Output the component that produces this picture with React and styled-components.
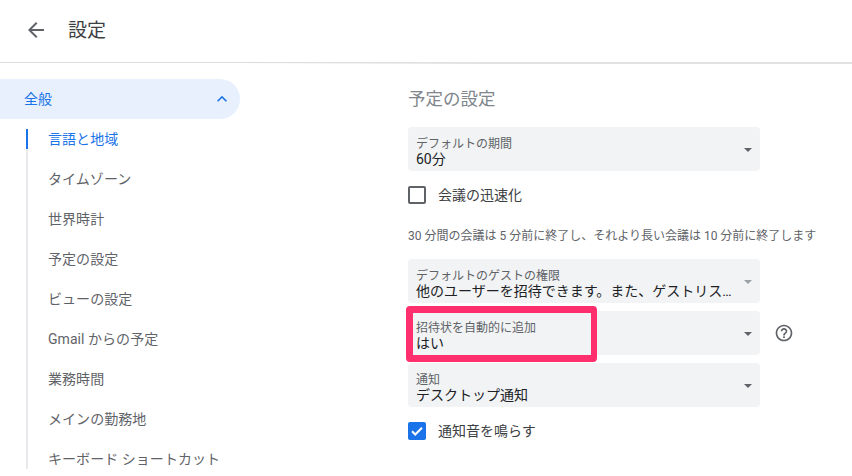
import React from "react";
import styled, { createGlobalStyle } from "styled-components";

const Global = createGlobalStyle`
  html, body {
    margin: 0;
    padding: 0;
    height: 476px;
    overflow: hidden;
    background: #fff;
  }
  body {
    font-family: Roboto, "Noto Sans CJK JP", sans-serif;
  }
`;

const Page = styled.div`
  width: 852px;
  height: 469px;
  overflow: hidden;
  display: flex;
  flex-direction: column;
`;

const Header = styled.header`
  position: relative;
  flex: none;
  display: flex;
  align-items: center;
  padding: 0 0 2px 24px;
  gap: 21px;
  border-bottom: 1px solid #dadce0;
  height: 60px;
  &::after {
    content: "";
    position: absolute;
    left: 240px;
    right: 0;
    top: 100%;
    height: 2px;
    background: linear-gradient(to right, transparent, #e2e2e2 40%, #e2e2e2);
  }
`;

const BackIcon = styled.svg`
  width: 24px;
  height: 24px;
  fill: #5f6368;
`;

const HeaderTitle = styled.div`
  font-size: 19px;
  color: #3c4043;
  margin-left: -1px;
  padding-bottom: 3px;
`;

const Body = styled.div`
  flex: 1;
  display: flex;
  min-height: 0;
`;

const Sidebar = styled.nav`
  width: 240px;
  flex: none;
  padding-top: 16px;
`;

const GroupRow = styled.div`
  height: 40px;
  box-sizing: border-box;
  border-radius: 0 20px 20px 0;
  background: #e8f0fe;
  color: #1a73e8;
  font-size: 14px;
  display: flex;
  align-items: center;
  justify-content: space-between;
  padding: 0 8px 2px 24px;
`;

const Chevron = styled.svg`
  width: 20px;
  height: 20px;
  fill: #1a73e8;
  margin-bottom: -2px;
`;

const SubList = styled.div`
  margin: 10px 0 0 26px;
  border-left: 2px solid #e8eaed;
  display: flex;
  flex-direction: column;
`;

const SubItem = styled.div`
  height: 40px;
  box-sizing: border-box;
  display: flex;
  align-items: center;
  padding: 0 0 2px 22px;
  margin-left: -2px;
  font-size: 14px;
  letter-spacing: 0.05px;
  white-space: nowrap;
  color: ${({ $active }) => ($active ? "#1a73e8" : "#5f6368")};
  position: relative;
  &:first-child {
    margin-top: -10px;
  }
  &::before {
    content: "";
    display: ${({ $active }) => ($active ? "block" : "none")};
    position: absolute;
    left: 0;
    top: 10px;
    width: 2px;
    height: 20px;
    background: #1a73e8;
  }
`;

const Main = styled.main`
  flex: 1;
  padding: 24px 0 0 168px;
  display: flex;
  flex-direction: column;
  align-items: flex-start;
`;

const SectionTitle = styled.h2`
  margin: 0 0 16px;
  font-size: 17.5px;
  line-height: 24px;
  font-weight: 400;
  color: #80868b;
`;

const SelectRow = styled.div`
  display: flex;
  align-items: center;
  gap: 14px;
  margin-bottom: ${({ $mb }) => $mb || 8}px;
`;

const Select = styled.div`
  position: relative;
  width: 352px;
  height: 44px;
  box-sizing: border-box;
  background: #f1f3f4;
  border-radius: 4px;
  padding: 9px 24px 0 8px;
`;

const SelectLabel = styled.div`
  font-size: 12px;
  line-height: 16px;
  color: #5f6368;
`;

const SelectValue = styled.div`
  font-size: 14px;
  line-height: 15px;
  color: #202124;
  white-space: nowrap;
`;

const Caret = styled.span`
  position: absolute;
  right: 8px;
  top: 21px;
  width: 0;
  height: 0;
  border-left: 4px solid transparent;
  border-right: 4px solid transparent;
  border-top: 4px solid ${({ $muted }) => ($muted ? "#9aa0a6" : "#5f6368")};
`;

const Highlight = styled.div`
  position: absolute;
  left: -2px;
  top: -5px;
  width: 191px;
  height: 56px;
  box-sizing: border-box;
  border: 7px solid #ff2e6d;
  border-right-width: 6px;
  border-radius: 4px;
`;

const CheckRow = styled.label`
  display: flex;
  align-items: center;
  gap: 12px;
  font-size: 14px;
  color: #3c4043;
  height: 20px;
`;

const CheckText = styled.span`
  padding-bottom: 2px;
`;

const CheckBox = styled.span`
  width: 18px;
  height: 18px;
  box-sizing: border-box;
  border-radius: 2px;
  border: ${({ $checked }) => ($checked ? "none" : "2px solid #5f6368")};
  background: ${({ $checked }) => ($checked ? "#1a73e8" : "transparent")};
  display: flex;
  align-items: center;
  justify-content: center;
`;

const Hint = styled.p`
  margin: 23px 0 15px;
  font-size: 12px;
  line-height: 16px;
  color: #5f6368;
  white-space: nowrap;
`;

const HelpIcon = styled.svg`
  width: 20px;
  height: 20px;
  fill: #5f6368;
`;

const menu = [
  "言語と地域",
  "タイムゾーン",
  "世界時計",
  "予定の設定",
  "ビューの設定",
  "Gmail からの予定",
  "業務時間",
  "メインの勤務地",
  "キーボード ショートカット",
];

export default function App() {
  return (
    <Page>
      <Global />
      <Header>
        <BackIcon viewBox="0 0 24 24">
          <path d="M20 11H7.83l5.59-5.59L12 4l-8 8 8 8 1.41-1.41L7.83 13H20v-2z" />
        </BackIcon>
        <HeaderTitle>設定</HeaderTitle>
      </Header>
      <Body>
        <Sidebar>
          <GroupRow>
            全般
            <Chevron viewBox="0 0 24 24">
              <path d="M12 8l-6 6 1.41 1.41L12 10.83l4.59 4.58L18 14z" />
            </Chevron>
          </GroupRow>
          <SubList>
            {menu.map((m, i) => (
              <SubItem key={m} $active={i === 0}>{m}</SubItem>
            ))}
          </SubList>
        </Sidebar>
        <Main>
          <SectionTitle>予定の設定</SectionTitle>
          <SelectRow $mb={14}>
            <Select>
              <SelectLabel>デフォルトの期間</SelectLabel>
              <SelectValue>60分</SelectValue>
              <Caret />
            </Select>
          </SelectRow>
          <CheckRow>
            <CheckBox />
            <CheckText>会議の迅速化</CheckText>
          </CheckRow>
          <Hint>30 分間の会議は 5 分前に終了し、それより長い会議は 10 分前に終了します</Hint>
          <SelectRow>
            <Select>
              <SelectLabel>デフォルトのゲストの権限</SelectLabel>
              <SelectValue>他のユーザーを招待できます。また、ゲストリス…</SelectValue>
              <Caret $muted />
            </Select>
          </SelectRow>
          <SelectRow>
            <Select>
              <SelectLabel>招待状を自動的に追加</SelectLabel>
              <SelectValue>はい</SelectValue>
              <Caret />
              <Highlight />
            </Select>
            <HelpIcon viewBox="0 0 24 24">
              <path d="M11 18h2v-2h-2v2zm1-16C6.48 2 2 6.48 2 12s4.48 10 10 10 10-4.48 10-10S17.52 2 12 2zm0 18c-4.41 0-8-3.59-8-8s3.59-8 8-8 8 3.59 8 8-3.59 8-8 8zm0-14c-2.21 0-4 1.79-4 4h2c0-1.1.9-2 2-2s2 .9 2 2c0 2-3 1.75-3 5h2c0-2.25 3-2.5 3-5 0-2.21-1.79-4-4-4z" />
            </HelpIcon>
          </SelectRow>
          <SelectRow $mb={14}>
            <Select>
              <SelectLabel>通知</SelectLabel>
              <SelectValue>デスクトップ通知</SelectValue>
              <Caret />
            </Select>
          </SelectRow>
          <CheckRow>
            <CheckBox $checked>
              <svg width="14" height="14" viewBox="0 0 24 24" fill="none" stroke="#fff" strokeWidth="3.4">
                <path d="M3.5 12.5l5.5 5.5L20.5 6.5" />
              </svg>
            </CheckBox>
            <CheckText>通知音を鳴らす</CheckText>
          </CheckRow>
        </Main>
      </Body>
    </Page>
  );
}
